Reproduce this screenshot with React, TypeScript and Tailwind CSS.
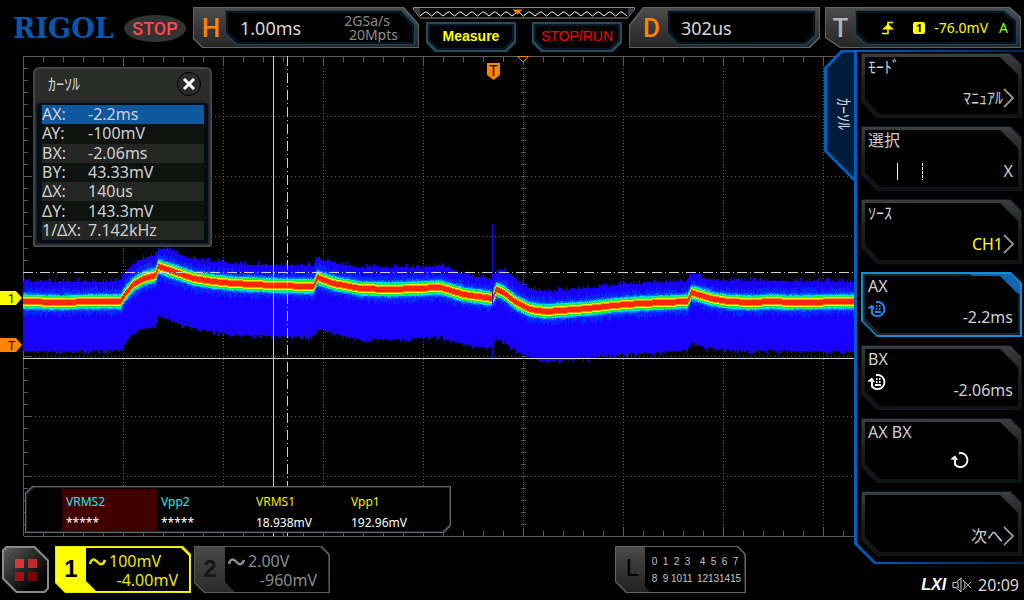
import React from 'react';
import { clsx } from 'clsx';

type Point = [number, number];

// Trace shape, in grid pixels: mean value and the two edges of the noise band
const center: Point[] = [
  [23, 301], [60, 302], [90, 301], [120, 301], [125, 293], [133, 284], [143, 278], [155, 275], [158, 266],
  [173, 271], [193, 278], [213, 281], [233, 283], [273, 285], [313, 286], [317, 277], [333, 283], [360, 288],
  [390, 289], [440, 287], [463, 294], [492, 298], [496, 289], [503, 292], [517, 303], [530, 309], [545, 311],
  [587, 308], [613, 305], [640, 303], [687, 301], [691, 292], [710, 298], [727, 301], [750, 302], [773, 301],
  [790, 302], [854, 301],
];
const upper: Point[] = [
  [23, 281], [119, 281], [128, 268], [137, 260], [155, 254], [158, 248], [170, 249], [187, 258], [213, 261],
  [240, 264], [313, 265], [317, 258], [333, 262], [357, 267], [430, 267], [442, 265], [457, 271], [473, 276],
  [492, 278], [495, 270], [502, 269], [520, 283], [532, 289], [547, 291], [587, 288], [623, 284], [653, 282],
  [687, 281], [690, 273], [695, 274], [703, 278], [713, 280], [854, 281],
];
const lower: Point[] = [
  [23, 351], [120, 350], [130, 336], [140, 329], [155, 326], [158, 315], [173, 321], [193, 328], [213, 331],
  [240, 335], [313, 336], [317, 329], [340, 335], [360, 339], [400, 339], [440, 336], [457, 342], [472, 346],
  [492, 347], [495, 339], [503, 341], [518, 352], [532, 359], [547, 361], [580, 359], [613, 354], [687, 350],
  [691, 342], [700, 346], [727, 350], [854, 351],
];

const valueAt = (points: Point[], x: number) => {
  const i = Math.max(1, points.findIndex(([px]) => px >= x));
  const [x0, y0] = points[i - 1];
  const [x1, y1] = points[i];
  return y0 + ((y1 - y0) * (x - x0)) / (x1 - x0);
};

const noise = (x: number, seed: number) => {
  const v = Math.sin(x * 12.9898 + seed * 78.233) * 43758.5453;
  return v - Math.floor(v);
};

const band = (top: (x: number) => number, bottom: (x: number) => number) => {
  let d = '';
  for (let x = 23; x < 854; x++) {
    const t = Math.round(top(x));
    d += `M${x} ${t}h1V${Math.round(bottom(x))}h-1z`;
  }
  return d;
};

const core = (half: number, jitter: number, seed: number) =>
  band(
    (x) => valueAt(center, x) - half - noise(x, seed) * jitter,
    (x) => valueAt(center, x) + half + noise(x, seed + 1) * jitter + 1,
  );

const layers = [
  {
    fill: '#1800ff',
    d: band(
      (x) => valueAt(upper, x) - Math.pow(noise(x, 1), 3) * 4 + 1,
      (x) => valueAt(lower, x) + Math.pow(noise(x, 2), 3) * 4,
    ),
  },
  { fill: '#0828ff', d: core(9, 6, 3) },
  { fill: '#0070ff', d: core(7, 2, 5) },
  { fill: '#00e0ff', d: core(6, 1, 7) },
  { fill: '#10f040', d: core(5, 1, 9) },
  { fill: '#e8ff00', d: core(4, 0, 11) },
  { fill: '#ff9000', d: core(3, 0, 13) },
  { fill: '#ff2800', d: core(2, 0, 15) },
];

const range = (from: number, to: number, step: number) => {
  const out: number[] = [];
  for (let v = from; v <= to; v += step) out.push(v);
  return out;
};

const Graticule = () => (
  <g stroke="#5c5c5c" fill="none">
    <path d="M23.5 536V56.5H854M23.5 536.5H854" />
    {range(123, 823, 100).map((x) => (
      <path key={x} d={`M${x + 0.5} 56V536`} strokeDasharray={x === 523 ? '1 1' : '1 2'} />
    ))}
    {range(116, 476, 60).map((y) => (
      <path key={y} d={`M23 ${y + 0.5}H854`} strokeDasharray="1 3" />
    ))}
    {range(43, 843, 20).map((x) => {
      const len = (x - 23) % 100 === 0 ? 8 : 5;
      return <path key={x} d={`M${x + 0.5} 57v${len}M${x + 0.5} 536v-${len}`} />;
    })}
    {range(68, 524, 12).map((y) => (
      <path key={y} d={`M24 ${y + 0.5}h${(y - 56) % 60 === 0 ? 8 : 4}M521 ${y + 0.5}h5`} />
    ))}
  </g>
);

const Scope = () => (
  <svg
    className="absolute inset-0 h-full w-full"
    viewBox="0 48 854 492"
    preserveAspectRatio="none"
    shapeRendering="crispEdges"
    aria-hidden="true"
  >
    <Graticule />
    {layers.map((layer) => (
      <path key={layer.fill} d={layer.d} fill={layer.fill} />
    ))}
    <path d="M492 224h1V359h-1z" fill="#1800ff" />
    {/* Cursors */}
    <g stroke="#d0d0d0" fill="none">
      <path d="M273.5 56V536M23 358.5H854" />
      <path d="M287.5 56V536M23 272.5H854" strokeDasharray="10 3 1 3" />
    </g>
    <path d="M517.5 56.5h11l-5.500 5.500z" fill="#000" stroke="#ff8400" shapeRendering="auto" />
  </svg>
);

const Chevron = () => (
  <svg width="11" height="20" viewBox="0 0 11 20" fill="none" stroke="#8c8c8c" strokeWidth="2" aria-hidden="true">
    <path d="M1 1l9 9-9 9" />
  </svg>
);

const KnobIcon = ({ color, keypad = false }: { color: string; keypad?: boolean }) => (
  <svg width="20" height="18" viewBox="0 0 20 18" fill="none" aria-hidden="true">
    <path d="M8 2.200A7 7 0 1 1 4 13.500L4 9" stroke={color} strokeWidth="2" />
    <path d="M-1 8.500L4 4.500l3 4.500z" fill={color} />
    {keypad && <path d="M8 5h1.500v2H8zM11 5h1.500v2H11zM8 8h1.500v2H8zM11 8h1.500v2H11zM7 11h6v2H7z" fill={color} />}
  </svg>
);

const SineIcon = ({ color }: { color: string }) => (
  <svg width="17" height="10" viewBox="0 0 17 10" fill="none" stroke={color} strokeWidth="2.500" aria-hidden="true">
    <path d="M1 7C2 2 5 1 8 4.500s6 4 8-1.500" />
  </svg>
);

const readoutClip = {
  h: '[clip-path:polygon(0_0,calc(100%_-_15px)_0,100%_17px,100%_100%,9px_100%,0_calc(100%_-_9px))]',
  d: '[clip-path:polygon(14px_0,100%_0,100%_calc(100%_-_10px),calc(100%_-_10px)_100%,0_100%,0_18px)]',
  t: '[clip-path:polygon(0_0,calc(100%_-_11px)_0,100%_10px,100%_100%,15px_100%,0_calc(100%_-_10px))]',
};
const screenClip = {
  h: '[clip-path:polygon(0_0,calc(100%_-_13px)_0,100%_14px,100%_100%,11px_100%,0_calc(100%_-_11px))]',
  d: '[clip-path:polygon(0_0,100%_0,100%_calc(100%_-_9px),calc(100%_-_9px)_100%,10px_100%,0_calc(100%_-_11px))]',
  t: '[clip-path:polygon(0_0,calc(100%_-_12px)_0,100%_10px,100%_100%,10px_100%,0_calc(100%_-_10px))]',
};

interface ReadoutProps {
  kind: 'h' | 'd' | 't';
  letter: string;
  className: string;
  letterClass: string;
  children: React.ReactNode;
}

const Readout: React.FC<ReadoutProps> = ({ kind, letter, className, letterClass, children }) => (
  <div className={clsx('mt-[7px] h-[41px] bg-[#626262] p-px', readoutClip[kind], className)}>
    <div
      className={clsx(
        'flex h-full bg-linear-to-b from-[#4c4c4c] to-[#262626] py-[2px] pr-[3px]',
        readoutClip[kind],
      )}
    >
      <div className={clsx('flex shrink-0 items-center justify-center pt-[2px] font-[Roboto,sans-serif] text-[26px]', letterClass)}>
        {letter}
      </div>
      <div className={clsx('min-w-0 flex-1 bg-[#1d4452] p-px', screenClip[kind])}>
        <div className={clsx('h-full bg-[#071522] p-[2px]', screenClip[kind])}>
          <div className={clsx('flex h-full items-center bg-black', screenClip[kind])}>{children}</div>
        </div>
      </div>
    </div>
  </div>
);

const softKeyClip =
  '[clip-path:polygon(0_0,100%_0,100%_calc(100%_-_9px),calc(100%_-_9px)_100%,9px_100%,0_calc(100%_-_9px))]';

const HeaderButton = ({ label, className }: { label: string; className: string }) => (
  <button className={clsx('h-[30px] w-[90px] bg-[#2b4a57] p-[2px]', softKeyClip)}>
    <span className={clsx('block h-full bg-[#071826] p-[2px]', softKeyClip)}>
      <span
        className={clsx(
          'flex h-full items-center justify-center bg-black pb-[2px] font-["Liberation_Sans",sans-serif] text-sm',
          softKeyClip,
          className,
        )}
      >
        {label}
      </span>
    </span>
  </button>
);

const MemoryBar = () => (
  <svg className="block h-3 w-full" viewBox="0 0 222 12" aria-hidden="true">
    <path d="M0.500 0.500h221v2l-7 8.500h-207l-7-8.500z" fill="#000" stroke="#8a8a8a" />
    <path d="M1 1h6v9L1 2.500zM221 1h-6v9l6-7.500z" fill="#3b3b44" />
    <path
      d={'M7 9' + range(0, 17, 1).map(() => 'l5-4 1.500 0 5 4').join('')}
      fill="none"
      stroke="#fff"
    />
    <path d="M99.500 2.500h10l-5 5z" fill="#ff8400" />
  </svg>
);

const Header = () => (
  <header className="relative z-10 flex h-12 items-start pr-[3px] pl-[13px]">
    <div className="mt-[11px] w-[111px] shrink-0 font-['DejaVu_Serif',serif] text-[27px] leading-9 font-bold text-[#0658aa]">
      RIGOL
    </div>
    <div className="mt-[15px] mr-[7px] flex h-[27px] w-[62px] shrink-0 items-center justify-center rounded-[50%] bg-[#333] pt-px font-[Roboto,sans-serif] text-lg font-medium text-[#ff4a4a]">
      STOP
    </div>

    <Readout kind="h" letter="H" className="grow basis-[226px]" letterClass="w-[31px] pl-[3px] font-medium text-[#ff8400]">
      <span className="flex-1 pl-3 text-lg text-[#d8d8d8]">1.00ms</span>
      <span className="pr-[14px] text-right text-sm leading-[14px] text-[#8c8c8c]">
        <span className="block pr-2">2GSa/s</span>
        <span className="block">20Mpts</span>
      </span>
    </Readout>

    <div className="relative z-10 -mx-[6px] mt-[7px] w-[222px] shrink-0">
      <MemoryBar />
      <div className="mt-[3px] flex justify-between px-[13px]">
        <HeaderButton label="Measure" className="font-bold text-[#ffff00]" />
        <HeaderButton label="STOP/RUN" className="text-[#ff0000]" />
      </div>
    </div>

    <Readout kind="d" letter="D" className="mr-[5px] grow basis-[191px]" letterClass="w-[37px] pl-[6px] font-medium text-[#ff8400]">
      <span className="pl-[11px] text-lg text-[#d8d8d8]">302us</span>
    </Readout>

    <Readout kind="t" letter="T" className="grow basis-[196px]" letterClass="w-[29px] text-[#b4b4b4] font-medium">
      <div className="flex flex-1 items-center justify-end pr-[6px] text-sm text-[#ffff00]">
        <svg width="12" height="14" viewBox="0 0 12 14" fill="none" className="mr-[19px]" aria-hidden="true">
          <path d="M0 12.500h6V1.500h5" stroke="#ffff00" strokeWidth="1.500" />
          <path d="M0 8.500h12L6 3z" fill="#ffff00" />
        </svg>
        <span className="mr-[9px] flex size-3 items-center justify-center rounded-xs bg-[#ffff00] text-[11px] font-bold text-black">
          1
        </span>
        <span className="mr-[11px]">-76.0mV</span>
        <span className="text-[#8cff30]">A</span>
      </div>
    </Readout>
  </header>
);

const cursorRows = [
  ['AX:', '-2.2ms'],
  ['AY:', '-100mV'],
  ['BX:', '-2.06ms'],
  ['BY:', '43.33mV'],
  ['ΔX:', '140us'],
  ['ΔY:', '143.3mV'],
  ['1/ΔX:', '7.142kHz'],
];

const CursorPanel = () => (
  <section className="absolute top-[19px] left-[33px] w-[179px] rounded-t-md rounded-b-xs border-2 border-[#3f4848] bg-[#2b2d2b]">
    <div className="flex h-8 items-center justify-between pr-[9px] pb-[3px] pl-[13px]">
      <h2 className="text-base text-[#d8d8d8]">ｶｰｿﾙ</h2>
      <button
        aria-label="閉じる"
        className="flex size-6 items-center justify-center rounded-full border border-black bg-[#2b2b2b]"
      >
        <svg width="12" height="12" viewBox="0 0 12 12" stroke="#fff" strokeWidth="3" aria-hidden="true">
          <path d="M1 1l10 10M11 1L1 11" />
        </svg>
      </button>
    </div>
    <div className="rounded-t-md border-2 border-[#1c252b] bg-[#060c14] pt-[2px] pr-1 pb-[3px] pl-[5px]">
      <table className="h-[135px] w-full border-collapse text-base leading-[19px] text-[#d0d0d0]">
        <tbody>
          {cursorRows.map(([name, value], i) => (
            <tr key={name} className={i === 0 ? 'bg-[#10589e]' : i % 2 ? 'bg-[#0f1310]' : 'bg-[#242624]'}>
              <th className="w-[46px] p-0 text-left font-normal whitespace-nowrap">{name}</th>
              <td className="p-0">{value}</td>
            </tr>
          ))}
        </tbody>
      </table>
    </div>
  </section>
);

const measurements = [
  { name: 'VRMS2', value: '*****', color: 'text-[#20e8e8]', cell: 'bg-[#400000]' },
  { name: 'Vpp2', value: '*****', color: 'text-[#20e8e8]', cell: '' },
  { name: 'VRMS1', value: '18.938mV', color: 'text-[#f0f000]', cell: '' },
  { name: 'Vpp1', value: '192.96mV', color: 'text-[#f0f000]', cell: '' },
];

const resultClip =
  '[clip-path:polygon(7px_0,100%_0,100%_calc(100%_-_7px),calc(100%_-_7px)_100%,0_100%,0_7px)]';

const ResultTable = () => (
  <div className={clsx('absolute top-[438px] left-[25px] w-[426px] bg-[#626a6c] p-px', resultClip)}>
    <div className={clsx('bg-[#1a2830] p-px', resultClip)}>
      <div className={clsx('bg-black pt-px pl-[35px]', resultClip)}>
        <table className="border-collapse text-xs text-white">
          <thead>
            <tr>
              {measurements.map((m) => (
                <th key={m.name} className={clsx('h-[23px] w-[95px] pt-[2px] pb-0 pl-1 text-left font-normal', m.color, m.cell)}>
                  {m.name}
                </th>
              ))}
            </tr>
          </thead>
          <tbody>
            <tr>
              {measurements.map((m) => (
                <td key={m.name} className={clsx('h-[19px] pt-[2px] pb-0 pl-1', m.cell)}>
                  {m.value}
                </td>
              ))}
            </tr>
          </tbody>
        </table>
      </div>
    </div>
  </div>
);

const LevelTag = ({ label, className }: { label: string; className: string }) => (
  <div
    className={clsx(
      'absolute left-0 h-[14px] w-[22px] pl-[8px] font-[Roboto,sans-serif] text-xs leading-4 text-black [clip-path:polygon(0_0,16px_0,100%_50%,16px_100%,0_100%)]',
      className,
    )}
  >
    {label}
  </div>
);

const channelClip =
  '[clip-path:polygon(0_0,calc(100%_-_8px)_0,100%_8px,100%_100%,10px_100%,0_calc(100%_-_10px))]';

interface ChannelProps {
  id: string;
  scale: string;
  offset: string;
  active?: boolean;
}

const Channel: React.FC<ChannelProps> = ({ id, scale, offset, active }) => (
  <button className={clsx('h-[47px] w-[136px] p-px', channelClip, active ? 'bg-[#e8e800]' : 'bg-[#5a5a5a]')}>
    <span
      className={clsx(
        'flex h-full pr-px',
        channelClip,
        active ? 'bg-[#ffff00] py-px' : 'bg-linear-to-b from-[#484848] to-[#2c2c2c]',
      )}
    >
      <span
        className={clsx(
          'flex w-[30px] shrink-0 items-center justify-center pb-[2px] font-["Liberation_Sans",sans-serif] text-2xl font-bold',
          active ? 'text-black' : 'text-[#161616]',
        )}
      >
        {id}
      </span>
      <span
        className={clsx(
          'block flex-1 bg-black pr-[11px] pl-[3px] text-right text-base leading-[19px]',
          channelClip,
          active ? 'pt-1 text-[#e8e800]' : 'pt-[5px] text-[#8c8c8c]',
        )}
      >
        <span className="flex items-center gap-[3px]">
          <SineIcon color={active ? '#e8e800' : '#8c8c8c'} />
          {scale}
        </span>
        <span className="block">{offset}</span>
      </span>
    </span>
  </button>
);

const logicClip =
  '[clip-path:polygon(0_0,calc(100%_-_8px)_0,100%_8px,100%_100%,11px_100%,0_calc(100%_-_11px))]';

const LogicChannels = () => (
  <button className={clsx('mr-[108px] ml-auto h-[47px] w-[131px] bg-[#646464] p-px', logicClip)}>
    <span className={clsx('flex h-full bg-linear-to-b from-[#4a4a4a] to-[#222] pr-px', logicClip)}>
      <span className="flex w-[29px] shrink-0 items-center justify-center pb-1 pl-1 font-['Liberation_Sans',sans-serif] text-2xl text-black">
        L
      </span>
      <span className="flex flex-1 flex-col justify-center gap-[3px] bg-black pt-[2px] pl-1 font-['Liberation_Sans_Narrow','Liberation_Sans',sans-serif] text-[10px] leading-[14px] text-[#c4c4c4] [clip-path:polygon(0_0,calc(100%_-_7px)_0,100%_7px,100%_100%,5px_100%,0_calc(100%_-_5px))]">
        {[0, 8].map((start) => (
          <span key={start} className="flex">
            {range(start, start + 7, 1).map((n) => (
              <span key={n} className={clsx('w-[11px] text-center', n === start + 4 && 'ml-1')}>
                {n}
              </span>
            ))}
          </span>
        ))}
      </span>
    </span>
  </button>
);

const Dock = () => (
  <footer className="flex h-[60px] shrink-0 items-start pt-[6px] pl-[2px]">
    <button
      aria-label="メニュー"
      className="mr-[6px] size-[47px] bg-[#8a8a8a] p-[2px] [clip-path:polygon(4px_0,33px_0,100%_14px,100%_43px,43px_100%,14px_100%,0_33px,0_4px)]"
    >
      <span className="grid h-full grid-cols-[9px_9px] place-content-center gap-1 bg-linear-to-br from-[#5c5c5c] via-[#222] to-[#000] [clip-path:polygon(3px_0,30px_0,100%_13px,100%_40px,40px_100%,13px_100%,0_30px,0_3px)]">
        <span className="size-[9px] bg-[#d83838]" />
        <span className="size-[9px] bg-[#c02c2c]" />
        <span className="size-[9px] bg-[#9c1414]" />
        <span className="size-[9px] bg-[#7c0404]" />
      </span>
    </button>
    <Channel id="1" scale="100mV" offset="-4.00mV" active />
    <div className="w-[3px]" />
    <Channel id="2" scale="2.00V" offset="-960mV" />
    <LogicChannels />
  </footer>
);

const menuOuterClip =
  '[clip-path:polygon(0_0,calc(100%_-_11px)_0,100%_11px,100%_100%,16px_100%,0_calc(100%_-_16px))]';
const menuInnerClip =
  '[clip-path:polygon(0_0,calc(100%_-_18px)_0,100%_18px,100%_100%,15px_100%,0_calc(100%_-_15px))]';

interface MenuKeyProps {
  label?: string;
  icon?: React.ReactNode;
  active?: boolean;
  children?: React.ReactNode;
}

const MenuKey: React.FC<MenuKeyProps> = ({ label, icon, active, children }) => (
  <button className={clsx('block h-[65px] w-full p-px', menuOuterClip, active ? 'bg-[#0c8fd0]' : 'bg-[#0c1924]')}>
    <span
      className={clsx(
        'block h-full',
        menuOuterClip,
        active
          ? 'border border-[#0c8fd0] bg-[linear-gradient(to_bottom_left,#1464b4_18px,#222_19px)] p-[2px]'
          : 'bg-linear-to-b from-[#3c3e3e] via-[#1c1e1e] to-[#101210] p-[3px]',
      )}
    >
      <span className={clsx('flex h-full flex-col bg-black pr-1 pl-[3px] text-base leading-5 text-[#d0d0d0]', menuInnerClip)}>
        <span className="h-5 text-left">{label}</span>
        <span className="flex h-[31px] items-end justify-between">
          <span className="self-start pt-1">{icon}</span>
          <span className="flex items-center">{children}</span>
        </span>
      </span>
    </span>
  </button>
);

const SideMenu = () => (
  <aside className="relative z-10 flex w-[170px] shrink-0 flex-col pt-[2px]">
    <div className="absolute top-[2px] -left-[30px] h-[133px] w-[31px]">
      <svg className="absolute inset-0" width="34" height="133" viewBox="0 0 34 133" aria-hidden="true">
        <path d="M34 1H18L1.500 18V101L31.500 131H34z" fill="#001c3c" />
        <path d="M34 1H18L1.500 18V101L31.500 131V133" fill="none" stroke="#0060c0" strokeWidth="3" />
      </svg>
      <span className="absolute top-[48px] left-[10px] text-base leading-5 text-[#d8d8d8] [text-orientation:sideways] [writing-mode:vertical-rl]">
        ｶｰｿﾙ
      </span>
    </div>
    <div className="bg-linear-to-r from-[#0060c0] to-[#002850] py-[2px] pl-[3px] [clip-path:polygon(0_0,100%_0,100%_100%,20px_100%,0_calc(100%_-_20px))]">
      <nav className="flex flex-col gap-2 bg-black pt-px pr-[2px] pb-[6px] pl-1 [clip-path:polygon(0_0,100%_0,100%_100%,19px_100%,0_calc(100%_-_19px))]">
        <MenuKey label="ﾓｰﾄﾞ">
          ﾏﾆｭｱﾙ
          <Chevron />
        </MenuKey>
        <MenuKey
          label="選択"
          icon={
            <svg width="56" height="17" viewBox="0 0 56 17" stroke="#fff" className="mt-[9px]" aria-hidden="true">
              <path d="M29.500 0v17" />
              <path d="M54.500 0v17" strokeDasharray="3 1" />
            </svg>
          }
        >
          <span className="pr-px">X</span>
        </MenuKey>
        <MenuKey label="ｿｰｽ">
          <span className="text-[#ffff00]">CH1</span>
          <Chevron />
        </MenuKey>
        <MenuKey label="AX" icon={<KnobIcon color="#1e8cff" keypad />} active>
          <span className="pr-px">-2.2ms</span>
        </MenuKey>
        <MenuKey label="BX" icon={<KnobIcon color="#fff" keypad />}>
          <span className="pr-px">-2.06ms</span>
        </MenuKey>
        <MenuKey label="AX BX">
          <span className="pr-[43px] pb-1">
            <KnobIcon color="#fff" />
          </span>
        </MenuKey>
        <MenuKey>
          次へ
          <Chevron />
        </MenuKey>
      </nav>
    </div>
    <div className="flex flex-1 items-center justify-end gap-[6px] pt-[5px] pr-[5px] text-base text-[#d8d8d8]">
      <span className="font-['Liberation_Sans',sans-serif] font-bold text-white italic">LXI</span>
      <svg width="20" height="16" viewBox="0 0 20 16" fill="none" stroke="#d8d8d8" aria-hidden="true">
        <path d="M1 5.500h3L9 1v14l-5-4.500H1zM6 5v6M11 3c2.500 2.500 2.500 7.500 0 10" />
        <path d="M13 5l6 6M19 5l-6 6" strokeWidth="0.800" />
      </svg>
      <span>20:09</span>
    </div>
  </aside>
);

const App: React.FC = () => (
  <div className="flex min-h-screen flex-col bg-black font-['Noto_Sans','Noto_Sans_CJK_JP',sans-serif]" lang="ja">
    <Header />
    <div className="flex flex-1">
      <div className="flex min-w-0 flex-1 flex-col">
        <main className="relative flex-1">
          <Scope />
          <LevelTag label="1" className="top-[243px] bg-[#ffff00]" />
          <LevelTag label="T" className="top-[290px] bg-[#ff8400]" />
          <div className="absolute top-[15px] left-[487px] h-[17px] w-[13px] bg-[#ff8400] text-center font-[Roboto,sans-serif] text-sm leading-4 text-black [clip-path:polygon(0_0,100%_0,100%_70%,50%_100%,0_70%)]">
            T
          </div>
          <CursorPanel />
          <ResultTable />
        </main>
        <Dock />
      </div>
      <SideMenu />
    </div>
  </div>
);

export default App;
